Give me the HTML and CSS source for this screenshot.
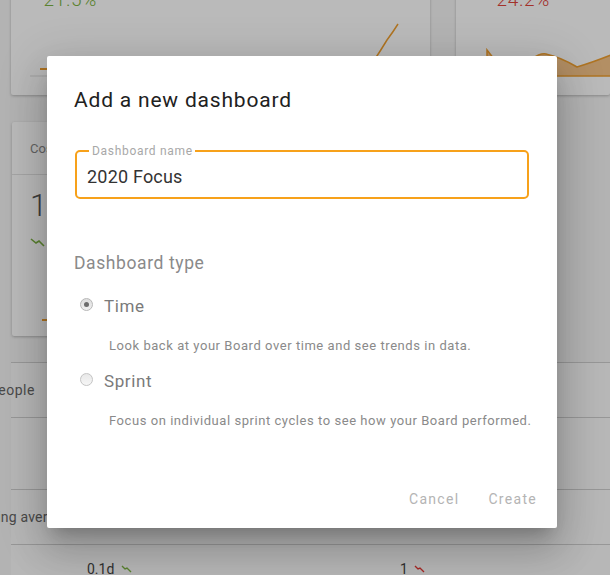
FILE: index.html
```html
<!DOCTYPE html>
<html>
<head>
<meta charset="utf-8">
<link rel="stylesheet" href="styles.css">
</head>
<body>
<div class="page">
  <div class="row row-top">
    <div class="card card-a">
      <div class="stat green"><span class="tri">&#x2198;</span>21.5%</div>
      <svg class="chart" width="419" height="95" viewBox="0 0 419 95">
        <line x1="19" y1="76" x2="419" y2="76" stroke="#dcdcdc" stroke-width="1"/>
        <path d="M29 69 L37 69" stroke="#f0a030" stroke-width="2" fill="none"/>
        <path d="M362 62 Q370 50 376 40 Q382 32 387 24" stroke="#f0a030" stroke-width="1.5" fill="none"/>
      </svg>
    </div>
    <div class="card card-b">
      <div class="stat red"><span class="tri">&#x2198;</span>24.2%</div>
      <svg class="chart" width="160" height="95" viewBox="0 0 160 95">
        <path d="M31 50 L38 59 Q58 68 76 59 Q84 53 90 54 Q104 57 121 67 Q138 62 160 53 L160 76 L31 76 Z" fill="#f6c48a" stroke="#f0a030" stroke-width="1.5"/>
      </svg>
    </div>
  </div>
  <div class="row row-mid">
    <div class="card card-c">
      <div class="card-head">Cost</div>
      <div class="big">17</div>
      <svg class="trend" width="20" height="12" viewBox="0 0 20 12"><path d="M1 2 L6 6 L9 4 L14 9" stroke="#7cb342" stroke-width="1.6" fill="none"/></svg>
      <div class="tick"></div>
    </div>
  </div>
  <div class="table">
    <div class="trow"><span class="tcell">People</span></div>
    <div class="trow tall"></div>
    <div class="trow"><span class="tcell shift">Rolling average</span></div>
    <div class="trow last">
      <span></span>
      <span class="val">0.1d <svg class="mini" width="12" height="8" viewBox="0 0 12 8"><path d="M1 1 L4 4 L6 3 L10 7" stroke="#7cb342" stroke-width="1.4" fill="none"/></svg></span>
      <span class="val">1 <svg class="mini" width="12" height="8" viewBox="0 0 12 8"><path d="M1 1 L4 4 L6 3 L10 7" stroke="#e53935" stroke-width="1.4" fill="none"/></svg></span>
    </div>
  </div>
</div>
<div class="overlay">
  <div class="dialog">
    <h1 class="title">Add a new dashboard</h1>
    <fieldset class="field">
      <legend class="legend">Dashboard name</legend>
      <div class="value">2020 Focus</div>
    </fieldset>
    <div class="type-label">Dashboard type</div>
    <div class="option">
      <span class="radio checked"></span>
      <span class="opt-label">Time</span>
    </div>
    <div class="desc">Look back at your Board over time and see trends in data.</div>
    <div class="option option-2">
      <span class="radio"></span>
      <span class="opt-label">Sprint</span>
    </div>
    <div class="desc desc-2">Focus on individual sprint cycles to see how your Board performed.</div>
    <div class="actions">
      <span class="btn">Cancel</span>
      <span class="btn">Create</span>
    </div>
  </div>
</div>
</body>
</html>
```

FILE: styles.css
```css
* { box-sizing: border-box; }
html, body {
  margin: 0;
  padding: 0;
  width: 610px;
  height: 575px;
  overflow: hidden;
  font-family: Roboto, "Noto Sans", Arial, sans-serif;
  background: #f6f6f6;
}
.page {
  margin-top: -20px;
  padding-left: 11px;
  height: 595px;
  overflow: hidden;
}
.row {
  display: flex;
  gap: 26px;
}
.card {
  background: #fff;
  box-shadow: 0 1px 3px rgba(0,0,0,0.25);
  border-radius: 2px;
  position: relative;
  overflow: hidden;
}
.card-a { width: 419px; height: 115px; padding: 8px 0 0 19px; }
.card-b { flex: 1; height: 115px; padding: 8px 0 0 27px; }
.stat { font-size: 19px; letter-spacing: 0.6px; height: 24px; font-weight: 300; }
.stat .tri { font-size: 8px; margin-right: 6px; vertical-align: 6px; }
.green { color: #7cb342; }
.red { color: #e0443a; }
.card-a .chart { margin: -12px 0 0 -19px; display: block; }
.card-b .chart { margin: -12px 0 0 -27px; display: block; }
.row-mid { margin-top: 27px; }
.card-c {
  width: 420px;
  height: 214px;
  margin-left: 1px;
}
.card-head {
  height: 53px;
  border-bottom: 1px solid #e2e2e2;
  padding: 19px 0 0 18px;
  font-size: 13px;
  color: #8a8a8a;
}
.big { font-size: 31px; color: #555; padding: 14px 0 0 18px; line-height: 34px; font-weight: 300; }
.trend { display: block; margin: 14px 0 0 18px; }
.tick { width: 6px; height: 2px; background: #f0a030; margin: 70px 0 0 30px; }
.table {
  margin-top: 26px;
  background: #fbfbfb;
}
.trow {
  height: 55px;
  border-top: 1px solid #cfcfcf;
  display: flex;
  align-items: center;
}
.trow.tall { height: 72px; }
.trow.last {
  height: 60px;
  display: grid;
  grid-template-columns: 76px 313px auto;
  align-items: start;
  padding-top: 16px;
}
.tcell { font-size: 14px; color: #666; margin-left: -22px; letter-spacing: 0.5px; }
.tcell.shift { margin-left: -38px; letter-spacing: 0.2px; }
.val { font-size: 14px; color: #444; }
.mini { margin-left: 3px; vertical-align: 1px; }

.overlay {
  position: absolute;
  left: 0; top: 0;
  width: 610px; height: 575px;
  background: rgba(0,0,0,0.27);
}
.dialog {
  position: absolute;
  left: 47px;
  top: 56px;
  width: 510px;
  height: 472px;
  background: #fff;
  border-radius: 2px;
  box-shadow: 0 11px 15px -7px rgba(0,0,0,0.2), 0 24px 38px 3px rgba(0,0,0,0.14), 0 9px 46px 8px rgba(0,0,0,0.12);
  padding: 31px 28px 0 27px;
  display: flex;
  flex-direction: column;
}
.title {
  margin: 0;
  font-size: 21px;
  font-weight: 400;
  color: #212121;
  line-height: 26px;
  letter-spacing: 0.8px;
}
.field {
  margin: 32px 0 0 1px;
  height: 54px;
  border: 2px solid #f7a11a;
  border-radius: 5px;
  padding: 0 0 0 10px;
  min-width: 0;
}
.legend {
  font-size: 12px;
  color: #a8a8a8;
  padding: 0 2px 0 3px;
  margin-left: 2px;
  line-height: 12px;
  letter-spacing: 0.7px;
}
.value {
  font-size: 18px;
  color: #333;
  line-height: 20px;
  margin-top: 10px;
  letter-spacing: 0.2px;
}
.type-label {
  margin-top: 54px;
  font-size: 17.5px;
  color: #8a8a8a;
  line-height: 20px;
  letter-spacing: 0.6px;
}
.option {
  display: flex;
  align-items: center;
  margin-top: 23px;
  margin-left: 6px;
  height: 20px;
}
.option-2 { margin-top: 18px; }
.radio {
  width: 13px;
  height: 13px;
  border-radius: 50%;
  border: 1px solid #c4c4c4;
  background: linear-gradient(#e8e8e8, #f6f6f6);
  margin-right: 11px;
  margin-top: -4px;
  position: relative;
}
.radio.checked {
  border-color: #b8b8b8;
  background: linear-gradient(#ddd, #f0f0f0);
}
.radio.checked::after {
  content: "";
  position: absolute;
  left: 3px; top: 3px;
  width: 5px; height: 5px;
  border-radius: 50%;
  background: #6c6c6c;
}
.opt-label {
  font-size: 17px;
  color: #7a7a7a;
  letter-spacing: 0.6px;
}
.desc {
  font-size: 13px;
  color: #8a8a8a;
  margin-top: 22px;
  margin-left: 35px;
  margin-right: -20px;
  letter-spacing: 0.55px;
  line-height: 15px;
  white-space: nowrap;
}
.desc-2 { margin-top: 22px; }
.actions {
  margin-top: 63px;
  display: flex;
  justify-content: flex-end;
  gap: 29px;
  margin-right: -8px;
}
.btn {
  font-size: 14px;
  letter-spacing: 1.3px;
  color: #b4b4b4;
  font-weight: 400;
}
```
